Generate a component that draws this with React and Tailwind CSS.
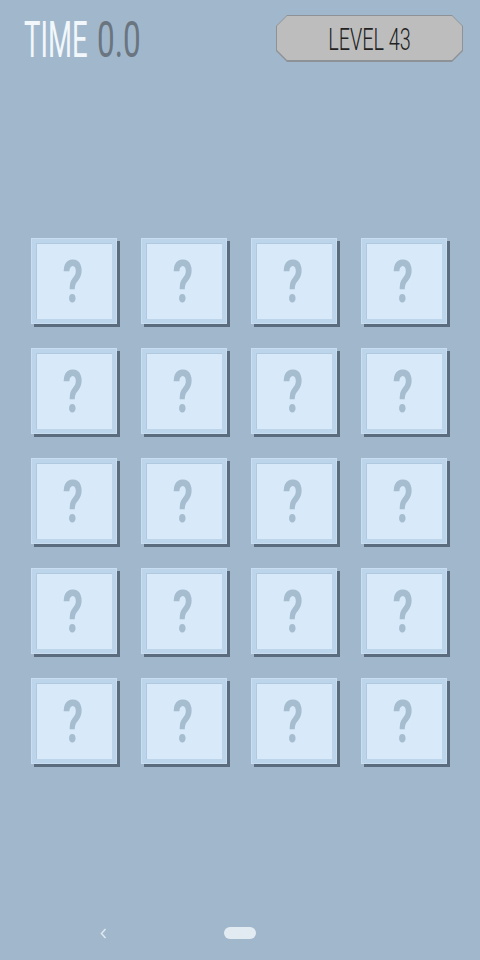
import React from "react";

function Card() {
  return (
    <div className="w-[86px] h-[86px] bg-[#bcd5eb] p-[4px] shadow-[3px_3px_0_#5a6c7d] border border-[#c9def0]">
      <div className="w-full h-full bg-[#d8eafa] border-t border-l border-[#b0c9df] flex items-center justify-center overflow-hidden pr-[4px]">
        <span
          className="inline-block scale-x-[0.68] text-[#a6bdd0] font-bold leading-none"
          style={{ fontFamily: "Roboto, 'Liberation Sans', sans-serif", fontSize: "60px" }}
        >
          ?
        </span>
      </div>
    </div>
  );
}

export default function App() {
  const cards = Array.from({ length: 20 });
  return (
    <div
      className="w-[480px] h-[960px] bg-[#a1b8cc] flex flex-col overflow-hidden"
      style={{ fontFamily: "Roboto, 'Liberation Sans', sans-serif" }}
    >
      <div className="flex items-start justify-between pt-[15px] pl-[24px] pr-[17px]">
        <div className="w-[120px] h-[50px] relative">
          <span className="absolute left-0 top-0 inline-block origin-left scale-x-[0.55] whitespace-nowrap text-[50px] leading-none font-normal text-[#f2f7fb]">
            TIME
          </span>
          <span className="absolute left-[73px] top-0 inline-block origin-left scale-x-[0.63] whitespace-nowrap text-[50px] leading-none font-normal text-[#6a7580]">
            0.0
          </span>
        </div>
        <div className="w-[187px] h-[47px] bg-[#8e9296] [clip-path:polygon(11px_0,176px_0,187px_11px,187px_36px,176px_47px,11px_47px,0_36px,0_11px)] pb-[2px] pt-[1px] px-[1px]">
          <div className="w-full h-full bg-[#bdbdbd] [clip-path:polygon(10px_0,175px_0,185px_10px,185px_34px,175px_44px,10px_44px,0_34px,0_10px)] flex items-center justify-center">
            <span className="inline-block scale-x-[0.64] whitespace-nowrap text-[31px] leading-none font-light text-[#222] pt-[3px]">
              LEVEL 43
            </span>
          </div>
        </div>
      </div>

      <div className="ml-[31px] mt-[173px] grid grid-cols-[repeat(4,86px)] gap-[24px]">
        {cards.map((_, i) => (
          <Card key={i} />
        ))}
      </div>

      <div className="mt-auto h-[54px] flex items-center pl-[100px]">
        <svg width="7" height="11" viewBox="0 0 7 11" className="block">
          <polyline points="5.5,1 1.5,5.5 5.5,10" fill="none" stroke="#dde7f0" strokeWidth="1.6" />
        </svg>
        <div className="ml-[117px] w-[32px] h-[12px] rounded-full bg-[#e3ebf2]" />
      </div>
    </div>
  );
}
